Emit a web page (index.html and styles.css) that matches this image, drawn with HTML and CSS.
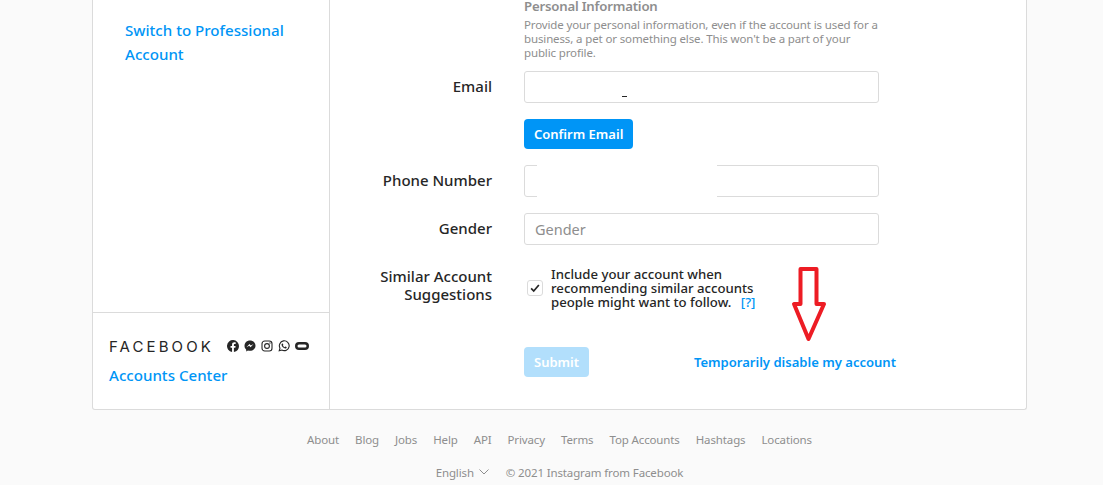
FILE: index.html
```html
<!DOCTYPE html>
<html lang="en">
<head>
    <meta charset="UTF-8">
    <meta name="viewport" content="width=device-width, initial-scale=1.0">
    <title>Edit Profile - Instagram</title>
    <link rel="stylesheet" href="styles.css">
</head>
<body>
    <div class="card">
        <aside class="sidebar">
            <a class="switch-link" href="#">Switch to Professional Account</a>
            <div class="accounts">
                <div class="fb-row">
                    <span class="fb-word">FACEBOOK</span>
                    <span class="fb-icons">
                        <svg viewBox="0 0 24 24"><path fill="#262626" d="M24 12a12 12 0 1 0-13.900 11.900v-8.400H7.100V12h3V9.400c0-3 1.800-4.700 4.500-4.700 1.300 0 2.700.2 2.700.2v3h-1.500c-1.500 0-2 .9-2 1.900V12h3.400l-.5 3.500h-2.900v8.400A12 12 0 0 0 24 12z"/></svg>
                        <svg viewBox="0 0 24 24"><path fill="#262626" d="M12 1C5.800 1 1 5.500 1 11.600c0 3.200 1.300 5.900 3.500 7.800v3.600l3.400-1.900c1.300.4 2.600.6 4.100.6 6.200 0 11-4.500 11-10.100C23 5.500 18.200 1 12 1zm1.100 13.500-2.800-3-5.400 3 6-6.300 2.900 3 5.300-3-6 6.300z"/></svg>
                        <svg viewBox="0 0 24 24"><g fill="none" stroke="#262626" stroke-width="2.200"><rect x="2" y="2" width="20" height="20" rx="5.500"/><circle cx="12" cy="12" r="4.800"/></g><circle cx="18" cy="6" r="1.300" fill="#262626"/></svg>
                        <svg viewBox="0 0 24 24"><path fill="none" stroke="#262626" stroke-width="2.200" d="M2.500 21.500l1.500-5.200A9.800 9.800 0 1 1 7.700 20z"/><path fill="#262626" d="M8.800 7c.5 0 .8 0 1 .6l.8 1.900c.1.300 0 .6-.2.800l-.7.900c.8 1.500 2 2.600 3.600 3.300l.9-1.100c.2-.3.500-.3.800-.2l1.900.9c.4.200.5.500.4.900-.2 1.400-1.400 2.100-2.700 2-3.400-.3-7-3.400-7.500-6.900C7 8.300 7.600 7.100 8.800 7z"/></svg>
                        <svg class="portal" viewBox="0 0 28 24"><rect x="2.500" y="6.500" width="23" height="11" rx="5.500" fill="none" stroke="#262626" stroke-width="5"/></svg>
                    </span>
                </div>
                <a class="accounts-link" href="#">Accounts Center</a>
            </div>
        </aside>

        <main class="form">
            <div class="row intro-row">
                <div></div>
                <div class="intro">
                    <h2>Personal Information</h2>
                    <p>Provide your personal information, even if the account is used for a business, a pet or something else. This won't be a part of your public profile.</p>
                </div>
            </div>

            <div class="row email-row">
                <label>Email</label>
                <div class="field-wrap">
                    <input class="field" type="text">
                    <span class="dash"></span>
                </div>
            </div>
            <div class="row confirm-row">
                <div></div>
                <div><button class="btn">Confirm Email</button></div>
            </div>
            <div class="row phone-row">
                <label>Phone Number</label>
                <div class="field-wrap">
                    <input class="field" type="text">
                    <span class="redact"></span>
                </div>
            </div>
            <div class="row gender-row">
                <label>Gender</label>
                <input class="field" type="text" placeholder="Gender">
            </div>
            <div class="row similar-row">
                <label class="label-two">Similar Account Suggestions</label>
                <div class="check-row">
                    <span class="checkbox">
                        <svg viewBox="0 0 14 14"><path d="M2.500 7.500l3 3 6-7" fill="none" stroke="#262626" stroke-width="2"/></svg>
                    </span>
                    <span class="check-text">Include your account when recommending similar accounts people might want to follow. <a href="#">[?]</a></span>
                </div>
            </div>
            <div class="row submit-row">
                <div></div>
                <div class="submit-wrap">
                    <button class="btn btn-off">Submit</button>
                    <a class="disable-link" href="#">Temporarily disable my account</a>
                </div>
            </div>
        </main>

        <svg class="arrow" viewBox="0 0 36 78"><path d="M9.500 4H25.500V39H33L17.500 74L3 39H9.500Z" fill="#fff" stroke="#ed1c24" stroke-width="4" stroke-linejoin="round"/></svg>
    </div>

    <footer class="footer">
        <nav class="foot-links">
            <a href="#">About</a>
            <a href="#">Blog</a>
            <a href="#">Jobs</a>
            <a href="#">Help</a>
            <a href="#">API</a>
            <a href="#">Privacy</a>
            <a href="#">Terms</a>
            <a href="#">Top Accounts</a>
            <a href="#">Hashtags</a>
            <a href="#">Locations</a>
        </nav>
        <div class="foot-meta">
            <span class="lang">English
                <svg viewBox="0 0 10 6"><path d="M.5.5L5 5 9.500.5" fill="none" stroke="#8e8e8e"/></svg>
            </span>
            <span>&copy; 2021 Instagram from Facebook</span>
        </div>
    </footer>
</body>
</html>
```

FILE: styles.css
```css
html, body {
    height: 485px;
    overflow: hidden;
}
body {
    background: #fafafa;
    color: #262626;
    font-family: "Noto Sans", "Open Sans", sans-serif;
    margin: 0;
    padding: 0;
}
a {
    color: #0095f6;
    text-decoration: none;
}
.card {
    position: relative;
    display: flex;
    width: 935px;
    height: 410px;
    margin: 0 0 0 92px;
    box-sizing: border-box;
    background: #fff;
    border: 1px solid #dbdbdb;
    border-top: none;
    border-radius: 0 0 3px 3px;
}
.sidebar {
    width: 237px;
    box-sizing: border-box;
    border-right: 1px solid #dbdbdb;
    display: flex;
    flex-direction: column;
    justify-content: space-between;
}
.switch-link {
    display: block;
    padding: 18px 32px 0;
    font-size: 15.100px;
    font-weight: 500;
    line-height: 24px;
}
.accounts {
    height: 97px;
    box-sizing: border-box;
    border-top: 1px solid #dbdbdb;
    padding: 24px 16px 0;
}
.fb-row {
    display: flex;
    align-items: center;
    height: 18px;
}
.fb-word {
    font-family: "Inter", sans-serif;
    font-size: 15px;
    font-weight: 400;
    letter-spacing: 3.100px;
    width: 118px;
    color: #262626;
}
.fb-icons {
    display: flex;
    align-items: center;
    gap: 5px;
}
.fb-icons svg {
    width: 12px;
    height: 12px;
    display: block;
}
.fb-icons .portal {
    width: 14px;
}
.accounts-link {
    display: block;
    margin-top: 10px;
    font-size: 15.100px;
    font-weight: 500;
    line-height: 20px;
}
.form {
    flex: 1;
    font-size: 14px;
}
.row {
    display: grid;
    grid-template-columns: 162px 355px;
    column-gap: 32px;
}
.row label {
    text-align: right;
    font-size: 15px;
    font-weight: 500;
    line-height: 20px;
    padding-top: 5px;
}
.row .label-two {
    line-height: 18px;
    padding-top: 2px;
}
.intro h2 {
    margin: -4px 0 0;
    font-size: 13.200px;
    font-weight: 600;
    letter-spacing: -.2px;
    line-height: 20px;
    color: #8e8e8e;
}
.intro p {
    margin: 2px 0 0;
    font-size: 11.500px;
    letter-spacing: -.13px;
    line-height: 14px;
    color: #8e8e8e;
}
.email-row {
    margin-top: 11px;
}
.confirm-row {
    margin-top: 16px;
}
.phone-row, .gender-row {
    margin-top: 16px;
}
.similar-row {
    margin-top: 20px;
}
.submit-row {
    margin-top: 38px;
}
.field-wrap {
    position: relative;
}
.field {
    display: block;
    width: 355px;
    height: 32px;
    box-sizing: border-box;
    border: 1px solid #dbdbdb;
    border-radius: 3px;
    background: #fff;
    padding: 0 10px;
    font: 400 14.500px "Noto Sans", sans-serif;
}
.field::placeholder {
    color: #8e8e8e;
}
.dash {
    position: absolute;
    left: 98px;
    top: 25px;
    width: 5px;
    height: 1px;
    background: #262626;
}
.redact {
    position: absolute;
    left: 13px;
    top: 0;
    width: 180px;
    height: 32px;
    background: #fff;
}
.btn {
    display: block;
    height: 30px;
    padding: 0 10px;
    border: none;
    border-radius: 4px;
    background: #0095f6;
    color: #fff;
    font: 600 13px "Noto Sans", sans-serif;
}
.btn-off {
    background: #b2dffc;
}
.check-row {
    display: flex;
    align-items: center;
    gap: 8px;
    padding: 2px 0 0 3px;
}
.checkbox {
    display: flex;
    align-items: center;
    justify-content: center;
    width: 14px;
    height: 14px;
    border: 1px solid #dbdbdb;
    border-radius: 3px;
    background: #fff;
}
.checkbox svg {
    width: 12px;
    height: 12px;
}
.check-text {
    width: 222px;
    font-size: 13.200px;
    font-weight: 500;
    line-height: 14px;
}
.check-text a {
    margin-left: 6px;
}
.submit-wrap {
    display: flex;
    align-items: center;
    justify-content: space-between;
    width: 372px;
}
.disable-link {
    font-size: 13.050px;
    font-weight: 600;
}
.arrow {
    position: absolute;
    left: 698px;
    top: 265px;
    width: 36px;
    height: 78px;
}
.footer {
    width: 935px;
    margin-left: 92px;
    font-size: 11.500px;
    letter-spacing: -.13px;
    line-height: 16px;
    color: #8e8e8e;
    padding-top: 22px;
}
.foot-links, .foot-meta {
    display: flex;
    justify-content: center;
    gap: 16px;
}
.foot-links a {
    color: #8e8e8e;
}
.foot-meta {
    margin-top: 17px;
    gap: 17px;
}
.lang svg {
    width: 10px;
    height: 6px;
    margin-left: 2px;
    vertical-align: 2px;
}
```
